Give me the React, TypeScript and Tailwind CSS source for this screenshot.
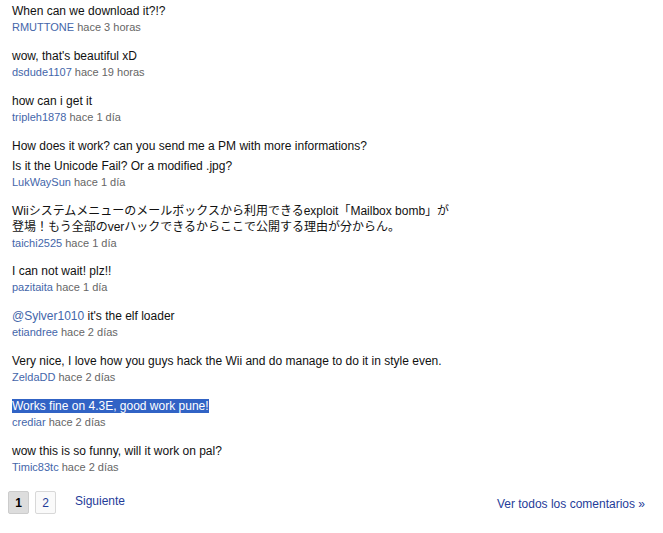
import React from 'react';

interface Comment {
  lines: React.ReactNode[];
  author: string;
  when: string;
  selected?: boolean;
  gap?: boolean;
  tight?: boolean;
}

const comments: Comment[] = [
  { lines: ['When can we download it?!?'], author: 'RMUTTONE', when: 'hace 3 horas' },
  { lines: ["wow, that's beautiful xD"], author: 'dsdude1107', when: 'hace 19 horas' },
  { lines: ['how can i get it'], author: 'tripleh1878', when: 'hace 1 día' },
  {
    lines: ['How does it work? can you send me a PM with more informations?', 'Is it the Unicode Fail? Or a modified .jpg?'],
    author: 'LukWaySun',
    when: 'hace 1 día',
    gap: true,
  },
  {
    lines: [
      'Wiiシステムメニューのメールボックスから利用できるexploit「Mailbox bomb」が',
      '登場！もう全部のverハックできるからここで公開する理由が分からん。',
    ],
    author: 'taichi2525',
    when: 'hace 1 día',
    tight: true,
  },
  { lines: ['I can not wait! plz!!'], author: 'pazitaita', when: 'hace 1 día' },
  {
    lines: [
      <>
        <a className="text-[#4466aa]">@Sylver1010</a> it's the elf loader
      </>,
    ],
    author: 'etiandree',
    when: 'hace 2 días',
  },
  {
    lines: ['Very nice, I love how you guys hack the Wii and do manage to do it in style even.'],
    author: 'ZeldaDD',
    when: 'hace 2 días',
  },
  { lines: ['Works fine on 4.3E, good work pune!'], author: 'crediar', when: 'hace 2 días', selected: true },
  { lines: ['wow this is so funny, will it work on pal?'], author: 'Timic83tc', when: 'hace 2 días' },
];

const CommentItem: React.FC<{ comment: Comment }> = ({ comment }) => (
  <div className={comment.tight ? 'mb-[12px]' : 'mb-[13px]'}>
    {comment.lines.map((line, i) => (
      <div
        key={i}
        className={`h-[16px] overflow-visible whitespace-nowrap text-[12px] leading-[16px] text-[#111] ${
          i > 0 && comment.gap ? 'mt-[4px]' : ''
        }`}
      >
        {comment.selected ? <span className="bg-[#3163c5] text-white">{line}</span> : line}
      </div>
    ))}
    <div className="h-[16px] text-[11px] leading-[16px] text-[#666]">
      <a className="text-[#4466aa]">{comment.author}</a> {comment.when}
    </div>
  </div>
);

export default function App() {
  return (
    <div
      className="w-[663px] h-[533px] bg-white overflow-hidden"
      style={{ fontFamily: '"Liberation Sans", Arial, "Noto Sans CJK JP", sans-serif' }}
    >
      <div className="pl-[12px] pt-[3px] w-[470px]">
        {comments.map((c, i) => (
          <CommentItem key={i} comment={c} />
        ))}
      </div>
      <div className="flex items-start pl-[8px] pr-[18px] mt-[16px]">
        <div className="flex gap-[6px]">
          <span className="w-[21px] h-[23px] flex items-center justify-center rounded-[2px] border border-[#cccccc] bg-[#dddddd] text-[12px] font-bold text-black">
            1
          </span>
          <span className="w-[21px] h-[23px] flex items-center justify-center rounded-[2px] border border-[#d8d8d8] bg-[#fafafa] text-[12px] text-[#1f3c99]">
            2
          </span>
        </div>
        <a className="ml-[19px] mt-[2px] text-[12px] leading-[16px] text-[#1f3c99]">Siguiente</a>
        <a className="ml-auto mt-[5px] text-[12px] leading-[16px] text-[#1f3c99]">Ver todos los comentarios »</a>
      </div>
    </div>
  );
}
